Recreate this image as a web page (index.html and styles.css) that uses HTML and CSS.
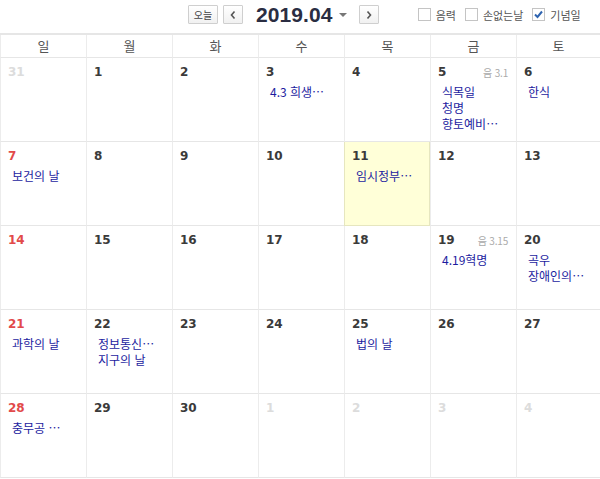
FILE: index.html
```html
<!DOCTYPE html>
<html lang="ko">
<head>
<meta charset="utf-8">
<link rel="stylesheet" href="styles.css">
</head>
<body>
<div class="toolbar">
  <div class="nav">
    <button class="btn today">오늘</button>
    <button class="btn arrow"><svg width="8" height="10" viewBox="0 0 8 10"><path d="M5.5 1.5 L2.5 5 L5.5 8.5" fill="none" stroke="#555" stroke-width="1.6"/></svg></button>
    <span class="month">2019.04</span>
    <span class="caret"></span>
    <button class="btn arrow next"><svg width="8" height="10" viewBox="0 0 8 10"><path d="M2.5 1.5 L5.5 5 L2.5 8.5" fill="none" stroke="#555" stroke-width="1.6"/></svg></button>
  </div>
  <div class="opts">
    <label class="opt"><span class="box"></span>음력</label>
    <label class="opt"><span class="box"></span>손없는날</label>
    <label class="opt"><span class="box"><svg width="11" height="11" viewBox="0 0 11 11"><path d="M2 5.5 L4.5 8 L9 2.5" fill="none" stroke="#2f64b0" stroke-width="2"/></svg></span>기념일</label>
  </div>
</div>

<div class="cal">
  <div class="wd">일</div><div class="wd">월</div><div class="wd">화</div><div class="wd">수</div><div class="wd">목</div><div class="wd">금</div><div class="wd">토</div>

  <div class="cell"><div class="top"><span class="num dim">31</span></div></div>
  <div class="cell"><div class="top"><span class="num">1</span></div></div>
  <div class="cell"><div class="top"><span class="num">2</span></div></div>
  <div class="cell"><div class="top"><span class="num">3</span></div><div class="ev">4.3 희생…</div></div>
  <div class="cell"><div class="top"><span class="num">4</span></div></div>
  <div class="cell"><div class="top"><span class="num">5</span><span class="lunar">음 3.1</span></div><div class="ev">식목일</div><div class="ev">청명</div><div class="ev">향토예비…</div></div>
  <div class="cell"><div class="top"><span class="num">6</span></div><div class="ev">한식</div></div>

  <div class="cell"><div class="top"><span class="num sun">7</span></div><div class="ev">보건의 날</div></div>
  <div class="cell"><div class="top"><span class="num">8</span></div></div>
  <div class="cell"><div class="top"><span class="num">9</span></div></div>
  <div class="cell"><div class="top"><span class="num">10</span></div></div>
  <div class="cell now"><div class="top"><span class="num">11</span></div><div class="ev">임시정부…</div></div>
  <div class="cell"><div class="top"><span class="num">12</span></div></div>
  <div class="cell"><div class="top"><span class="num">13</span></div></div>

  <div class="cell"><div class="top"><span class="num sun">14</span></div></div>
  <div class="cell"><div class="top"><span class="num">15</span></div></div>
  <div class="cell"><div class="top"><span class="num">16</span></div></div>
  <div class="cell"><div class="top"><span class="num">17</span></div></div>
  <div class="cell"><div class="top"><span class="num">18</span></div></div>
  <div class="cell"><div class="top"><span class="num">19</span><span class="lunar">음 3.15</span></div><div class="ev">4.19혁명</div></div>
  <div class="cell"><div class="top"><span class="num">20</span></div><div class="ev">곡우</div><div class="ev">장애인의…</div></div>

  <div class="cell"><div class="top"><span class="num sun">21</span></div><div class="ev">과학의 날</div></div>
  <div class="cell"><div class="top"><span class="num">22</span></div><div class="ev">정보통신…</div><div class="ev">지구의 날</div></div>
  <div class="cell"><div class="top"><span class="num">23</span></div></div>
  <div class="cell"><div class="top"><span class="num">24</span></div></div>
  <div class="cell"><div class="top"><span class="num">25</span></div><div class="ev">법의 날</div></div>
  <div class="cell"><div class="top"><span class="num">26</span></div></div>
  <div class="cell"><div class="top"><span class="num">27</span></div></div>

  <div class="cell"><div class="top"><span class="num sun">28</span></div><div class="ev">충무공 …</div></div>
  <div class="cell"><div class="top"><span class="num">29</span></div></div>
  <div class="cell"><div class="top"><span class="num">30</span></div></div>
  <div class="cell"><div class="top"><span class="num dim">1</span></div></div>
  <div class="cell"><div class="top"><span class="num dim">2</span></div></div>
  <div class="cell"><div class="top"><span class="num dim">3</span></div></div>
  <div class="cell"><div class="top"><span class="num dim">4</span></div></div>
</div>
</body>
</html>
```

FILE: styles.css
```css
* { box-sizing: border-box; }
html, body { margin: 0; padding: 0; background: #fff; }
body {
  width: 600px;
  height: 479px;
  overflow: hidden;
  font-family: "Noto Sans CJK KR", "Noto Sans", sans-serif;
}

.toolbar {
  height: 33px;
  display: flex;
  align-items: flex-start;
  padding-top: 5px;
}
.nav {
  display: flex;
  align-items: center;
  margin-left: 188px;
  height: 19px;
}
.btn {
  margin: 0;
  padding: 0;
  height: 19px;
  border: 1px solid #cfcfcf;
  background: linear-gradient(#ffffff, #f1f1f1);
  border-radius: 1px;
  display: flex;
  align-items: center;
  justify-content: center;
  font-family: "Noto Sans CJK KR", sans-serif;
  font-size: 10px;
  color: #444;
}
.today { width: 30px; }
.arrow { width: 20px; margin-left: 5px; }
.arrow.next { margin-left: 12px; }
.month {
  margin-left: 13px;
  font-family: "Liberation Sans", Arial, sans-serif;
  font-weight: bold;
  font-size: 21px;
  line-height: 19px;
  color: #2a2d42;
  letter-spacing: 0.1px;
}
.caret {
  margin-left: 6px;
  width: 0;
  height: 0;
  border-left: 4px solid transparent;
  border-right: 4px solid transparent;
  border-top: 4px solid #777;
}

.opts {
  display: flex;
  align-items: center;
  margin-left: 39px;
  height: 19px;
}
.opt {
  display: flex;
  align-items: center;
  font-size: 11px;
  color: #555;
  margin-right: 9px;
}
.box {
  width: 13px;
  height: 13px;
  border: 1px solid #c4c4c4;
  background: #fff;
  margin-right: 5px;
  display: flex;
  align-items: center;
  justify-content: center;
}

.cal {
  display: grid;
  grid-template-columns: repeat(6, 86px) 84px;
  grid-template-rows: 23px repeat(5, 84px);
  border-top: 2px solid #e6e6e6;
}
.wd {
  border-left: 1px solid #ececec;
  border-bottom: 1px solid #e6e6e6;
  text-align: center;
  font-size: 13px;
  line-height: 22px;
  color: #555;
}
.cell {
  border-left: 1px solid #ececec;
  border-bottom: 1px solid #e6e6e6;
  padding: 5px 8px 0 7px;
  overflow: hidden;
}
.cell.now {
  background: #ffffd8;
  border: 1px solid #e6e6bf;
  border-top: 0;
}
.top {
  display: flex;
  justify-content: space-between;
  align-items: center;
  height: 18px;
}
.num {
  font-family: "DejaVu Sans", Verdana, sans-serif;
  font-weight: bold;
  font-size: 12px;
  color: #3a3a3a;
}
.num.sun { color: #e24a4a; }
.num.dim { color: #dcdcdc; }
.lunar {
  font-size: 10px;
  color: #aaa;
  letter-spacing: -0.2px;
}
.ev {
  padding-left: 4px;
  font-size: 12px;
  line-height: 16px;
  color: #1c1ca0;
  white-space: nowrap;
}
.top + .ev { margin-top: 3px; }
```
